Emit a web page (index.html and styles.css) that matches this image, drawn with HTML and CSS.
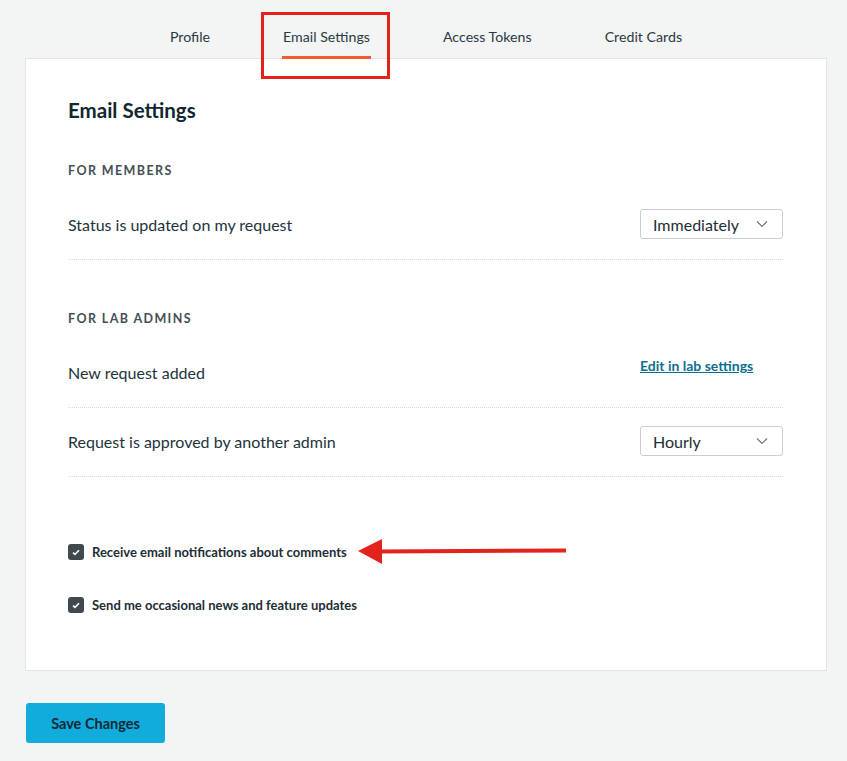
FILE: index.html
```html
<!DOCTYPE html>
<html lang="en">
<head>
  <meta charset="UTF-8" />
  <meta name="viewport" content="width=device-width, initial-scale=1.0" />
  <title>Email Settings</title>
  <link rel="stylesheet" href="styles.css">
</head>
<body>
  <div class="page">
    <nav class="tabs">
      <a class="tab">Profile</a>
      <a class="tab active">Email Settings</a>
      <a class="tab">Access Tokens</a>
      <a class="tab">Credit Cards</a>
    </nav>

    <div class="card">
      <h1>Email Settings</h1>

      <section class="group">
        <h2>For members</h2>
        <div class="row">
          <span class="row-label">Status is updated on my request</span>
          <div class="select">Immediately
            <svg width="12" height="8" viewBox="0 0 12 8"><path d="M1 1.5 L6 6.5 L11 1.5" fill="none" stroke="#6b7479" stroke-width="1.1"/></svg>
          </div>
        </div>
      </section>

      <section class="group">
        <h2>For lab admins</h2>
        <div class="row">
          <span class="row-label">New request added</span>
          <div class="control"><a class="link" href="#">Edit in lab settings</a></div>
        </div>
        <div class="row">
          <span class="row-label">Request is approved by another admin</span>
          <div class="select">Hourly
            <svg width="12" height="8" viewBox="0 0 12 8"><path d="M1 1.5 L6 6.5 L11 1.5" fill="none" stroke="#6b7479" stroke-width="1.1"/></svg>
          </div>
        </div>
      </section>

      <div class="checks">
        <label class="check">
          <span class="box"><svg width="8" height="7" viewBox="0 0 8 7"><path d="M1 3.6 L3 5.4 L7 1.2" fill="none" stroke="#fff" stroke-width="1.6"/></svg></span>
          Receive email notifications about comments
        </label>
        <label class="check">
          <span class="box"><svg width="8" height="7" viewBox="0 0 8 7"><path d="M1 3.6 L3 5.4 L7 1.2" fill="none" stroke="#fff" stroke-width="1.6"/></svg></span>
          Send me occasional news and feature updates
        </label>
      </div>
    </div>

    <button class="save">Save Changes</button>

    <!-- annotation overlay -->
    <div class="mark"></div>
    <svg class="arrow" width="212" height="28" viewBox="0 0 212 28">
      <path d="M20 13.5 L208 12.5" stroke="#e3221c" stroke-width="4" fill="none"/>
      <path d="M0 13 L24 1 L24 26 Z" fill="#e3221c"/>
    </svg>
  </div>
</body>
</html>
```

FILE: styles.css
```css
* {
  margin: 0;
  padding: 0;
  box-sizing: border-box;
}

html, body {
  background: #f3f4f4;
  font-family: Lato, "Open Sans", sans-serif;
  color: #1d2d35;
}

.page {
  position: relative;
  width: 802px;
  margin-left: 25px;
  padding-bottom: 20px;
}

.tabs {
  display: flex;
  justify-content: center;
  gap: 71px;
  height: 59px;
  align-items: flex-end;
  margin-bottom: -1px;
  position: relative;
  z-index: 1;
}

.tab {
  font-size: 14.2px;
  line-height: 20px;
  color: #2a3a42;
  padding: 0 1px 9px;
  border-bottom: 3px solid transparent;
}

.tab.active {
  border-bottom-color: #f25a34;
}

.card {
  background: #fff;
  border: 1px solid #e2e5e5;
  padding: 39px 43px 55px 42px;
}

h1 {
  font-size: 20.5px;
  line-height: 24px;
  font-weight: 700;
  color: #102630;
}

.group {
  margin-top: 51px;
}

.group:first-of-type {
  margin-top: 41px;
}

h2 {
  font-size: 12.5px;
  line-height: 16px;
  font-weight: 700;
  letter-spacing: 1.4px;
  text-transform: uppercase;
  color: #464f55;
  margin-bottom: 12px;
}

.row {
  display: flex;
  justify-content: space-between;
  align-items: center;
  padding: 18px 0 20px;
  border-bottom: 1px dotted #d6dadb;
  min-height: 69px;
}

.row-label {
  font-size: 16px;
  color: #22333b;
}

.control {
  width: 143px;
  align-self: flex-start;
  margin-top: -2px;
}

.link {
  font-size: 14px;
  line-height: 20px;
  font-weight: 700;
  color: #0d6e8f;
  text-decoration: underline;
}

.select {
  width: 143px;
  height: 30px;
  border: 1px solid #c8cfd2;
  border-radius: 3px;
  display: flex;
  align-items: center;
  justify-content: space-between;
  padding: 0 14px 0 12px;
  font-size: 16px;
  color: #1d2d35;
}

.checks {
  margin-top: 65px;
  display: flex;
  flex-direction: column;
  gap: 33px;
}

.check {
  display: flex;
  align-items: center;
  gap: 8px;
  font-size: 13px;
  line-height: 20px;
  font-weight: 700;
  color: #1d2d35;
}

.box {
  width: 16px;
  height: 16px;
  border-radius: 3px;
  background: #41484e;
  display: flex;
  align-items: center;
  justify-content: center;
}

.save {
  margin-top: 32px;
  margin-left: 1px;
  width: 139px;
  height: 40px;
  border: none;
  border-radius: 3px;
  background: #12acdc;
  color: #0f2a36;
  font-family: inherit;
  font-size: 14.5px;
  font-weight: 700;
}

.mark {
  position: absolute;
  left: 236px;
  top: 12px;
  width: 129px;
  height: 67px;
  border: 3px solid #e3221c;
}

.arrow {
  position: absolute;
  left: 333px;
  top: 538px;
}
```
